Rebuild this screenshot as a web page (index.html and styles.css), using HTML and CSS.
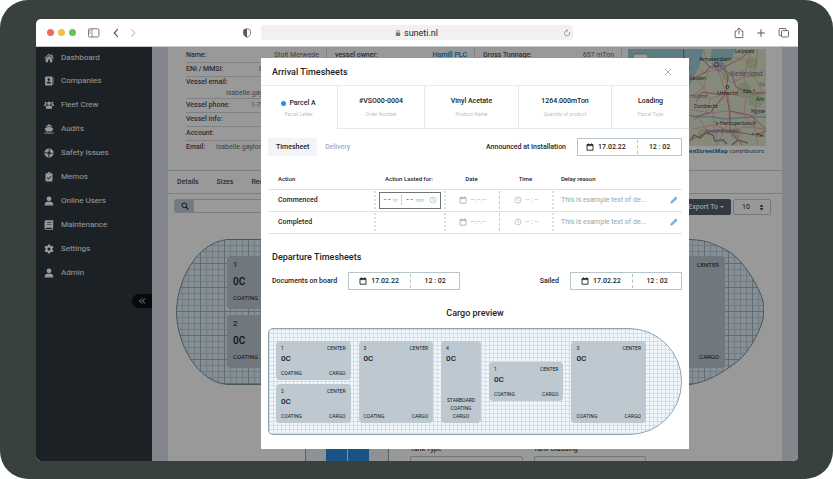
FILE: index.html
```html
<!DOCTYPE html>
<html lang="en">
<head>
<meta charset="utf-8">
<title>Arrival Timesheets</title>
<link rel="stylesheet" href="styles.css">
</head>
<body>
<svg class="sprite" aria-hidden="true">
  <symbol id="i-cal" viewBox="0 0 8 8"><path d="M1 1.500h6v5.700H1zM1 2.600h6M2.400.4v1.200M5.600.4v1.200" fill="none" stroke="currentColor" stroke-width=".9"/></symbol>
  <symbol id="i-clock" viewBox="0 0 8 8"><circle cx="4" cy="4" r="3" fill="none" stroke="currentColor" stroke-width=".7"/><path d="M4 2v2.100l1.400.6" fill="none" stroke="currentColor" stroke-width=".7"/></symbol>
  <symbol id="i-pen" viewBox="0 0 8 8"><path d="M.9 7.100l.5-1.800L5.700 1l1.300 1.300-4.300 4.300zM4.800 1.900l1.300 1.300M2 5.900l3-3" fill="#e4f1fd" stroke="#1f80e0" stroke-width=".7" stroke-linejoin="round"/></symbol>
  <symbol id="i-user" viewBox="0 0 10 10"><circle cx="5" cy="2.800" r="2.400"/><path d="M.8 9.600V8.400C.8 6.800 2 5.800 3.400 5.800h3.200c1.400 0 2.600 1 2.600 2.600v1.200z"/></symbol>
</svg>
<div class="frame">
<div class="browser">
  <header class="toolbar">
    <div class="tool-side">
      <span class="dot red"></span><span class="dot yellow"></span><span class="dot green"></span>
      <svg class="t-side" viewBox="0 0 12 10"><rect x=".5" y=".8" width="10.400" height="8.200" rx="1.200" fill="none" stroke="#6b6b6b" stroke-width=".9"/><path d="M4 .8V9M1.600 2.600h1.200M1.600 4h1.200M1.600 5.400h1.200" stroke="#6b6b6b" stroke-width=".7"/></svg>
      <svg class="t-nav" viewBox="0 0 6 10"><path d="M4.800 1.200L1.200 5l3.600 3.800" fill="none" stroke="#4d4d4d" stroke-width="1.100"/></svg>
      <svg class="t-nav next" viewBox="0 0 6 10"><path d="M1.200 1.200L4.800 5 1.200 8.800" fill="none" stroke="#aaa" stroke-width="1"/></svg>
      <svg class="t-shield" viewBox="0 0 8 10"><path d="M4 .8c1.200.1 2.400.5 3.300 1.100.3 1 .3 2 .2 3.400C7.300 7.300 6 8.600 4 9.300 2 8.600.7 7.300.5 5.300.4 3.900.4 2.900.7 1.900 1.600 1.300 2.800.9 4 .8z" fill="none" stroke="#666" stroke-width=".8"/><path d="M4 .8v8.500C2 8.600.7 7.300.5 5.300.4 3.900.4 2.900.7 1.900 1.600 1.300 2.800.9 4 .8z" fill="#5c5c5c"/></svg>
    </div>
    <label class="address">
      <svg class="t-lock" viewBox="0 0 6 8"><rect x=".8" y="3.500" width="4.400" height="3.600" rx=".6" fill="#777"/><path d="M1.800 3.600V2.400a1.200 1.200 0 012.400 0v1.200" fill="none" stroke="#777" stroke-width=".8"/></svg>
      <input type="text" value="suneti.nl" aria-label="Address">
      <svg class="t-reload" viewBox="0 0 8 8"><path d="M6.400 3a2.600 2.600 0 11-2.200-1.400" fill="none" stroke="#777" stroke-width=".7"/><path d="M3.500.4l1.300 1.200-1.300 1.200" fill="none" stroke="#777" stroke-width=".7"/></svg>
    </label>
    <div class="tool-side end">
      <svg class="t-share" viewBox="0 0 10 12"><path d="M3.200 4H1.200v6.600h7.600V4h-2M5 7.300V1M3 2.900L5 .9l2 2" fill="none" stroke="#5a5a5a" stroke-width=".9"/></svg>
      <svg class="t-plus" viewBox="0 0 10 10"><path d="M5 1.200v7.600M1.200 5h7.600" stroke="#5a5a5a" stroke-width="1"/></svg>
      <svg class="t-tabs" viewBox="0 0 12 12"><path d="M3.500 8.600H1.900a.8.8 0 01-.8-.8V2.300a.8.8 0 01.8-.8h5.400a.8.8 0 01.8.8v1.200" fill="none" stroke="#5a5a5a" stroke-width=".9"/><rect x="3.500" y="3.600" width="7" height="6.400" rx=".8" fill="none" stroke="#5a5a5a" stroke-width=".9"/></svg>
    </div>
  </header>
  <div class="app">
    <nav class="sidebar">
      <a href="#"><svg viewBox="0 0 10 10"><path d="M5 .8L.2 5l.6.700L5 2.100l4.200 3.600.6-.7L8.500 3.800V1.400H7.300v1.400zM5 2.900L1.700 5.700v3.500h2.400V6.600h1.800v2.600h2.400V5.700z"/></svg>Dashboard</a>
      <a href="#"><svg viewBox="0 0 10 10"><path fill-rule="evenodd" d="M1.800.6h6a.7.700 0 01.7.7v7.400a.7.700 0 01-.7.7h-6a.7.700 0 01-.7-.7V1.300a.7.700 0 01.7-.7zM4.800 2.300a1.300 1.300 0 100 2.600 1.300 1.300 0 000-2.600zM2.600 7.400h4.400c0-1.300-.8-2-2.200-2s-2.200.7-2.200 2zM8.900 2h.7v1.400h-.7zM8.900 4.300h.7v1.400h-.7zM8.900 6.600h.7V8h-.7z"/></svg>Companies</a>
      <a href="#"><svg viewBox="0 0 10 10"><circle cx="5" cy="3.300" r="1.700"/><circle cx="1.700" cy="2.800" r="1.100"/><circle cx="8.300" cy="2.800" r="1.100"/><path d="M2 8.800V7.200c0-1.100.8-1.800 1.800-1.800h2.400c1 0 1.800.7 1.800 1.800v1.600zM0 6V5.200c0-.6.5-1 1-1h1.400c.3 0 .5.100.7.300C2.300 4.900 1.800 5.400 1.700 6zM10 6V5.200c0-.6-.5-1-1-1H7.600c-.3 0-.5.100-.7.300.8.400 1.300.9 1.400 1.500z"/></svg>Fleet Crew</a>
      <a href="#"><svg viewBox="0 0 10 10"><path fill-rule="evenodd" d="M3.800.4h2.400v1.100h1.400v2.200l1.700.7-1.400 3H2.100l-1.400-3 1.700-.7V1.500h1.400zM3.300 2.500v.9L5 2.700l1.700.7v-.9z"/><path d="M.3 8.200c1 .8 1.900.8 2.900 0 1.200.8 2.400.8 3.600 0 1 .8 1.900.8 2.900 0v1c-1 .6-2 .6-2.900 0-1.200.7-2.400.7-3.600 0-.9.600-1.900.6-2.900 0z"/></svg>Audits</a>
      <a href="#"><svg viewBox="0 0 10 10"><g fill="none" stroke="currentColor"><circle cx="5" cy="5" r="3.200" stroke-width="2.300" stroke-dasharray="3.700 1.330" transform="rotate(12 5 5)"/><circle cx="5" cy="5" r="4.200" stroke-width=".7"/><circle cx="5" cy="5" r="2" stroke-width=".5"/></g></svg>Safety Issues</a>
      <a href="#"><svg viewBox="0 0 10 10"><path fill-rule="evenodd" d="M3.600 1.300a1.400 1.200 0 012.800 0h1.400a.7.700 0 01.7.7v6.800a.7.700 0 01-.7.7H2.200a.7.700 0 01-.7-.7V2a.7.700 0 01.7-.7zM3 5.900l1.500 1.600 2.800-2.900-.6-.6-2.200 2.200-.9-.9zM5 1a.4.400 0 100 .8A.4.400 0 005 1z"/></svg>Memos</a>
      <a href="#"><svg><use href="#i-user"/></svg>Online Users</a>
      <a href="#"><svg viewBox="0 0 10 10"><path fill-rule="evenodd" d="M1.800.2h7.400v7.300l-.4.400v1l.4.300v.6H2A1.400 1.400 0 01.6 8.400V1.600C.6.800 1.100.2 1.800.2zM2.900 2.200v.7h4.700v-.7zM2.900 3.900v.7h4.700v-.7zM2.200 7.700c-.7 0-.7 1.200 0 1.200h5.700V7.700z"/></svg>Maintenance</a>
      <a href="#"><svg viewBox="0 0 10 10"><circle cx="5" cy="5" r="2.500" fill="none" stroke="currentColor" stroke-width="2"/><path d="M4 .4h2l.3 2H3.700zM4 9.600h2l.3-2H3.700zM.5 3.500l1-1.700 1.900.8-1.200 2zM9.500 3.500l-1-1.700-1.900.8 1.200 2zM.5 6.500l1 1.700 1.900-.8-1.200-2zM9.500 6.500l-1 1.700-1.900-.8 1.200-2z"/></svg>Settings</a>
      <a href="#"><svg><use href="#i-user"/></svg>Admin</a>
      <button class="collapse" type="button" aria-label="Collapse menu"><svg viewBox="0 0 8 8"><path d="M4 1.500L1.500 4 4 6.500M7 1.500L4.500 4 7 6.500" fill="none" stroke="currentColor" stroke-width=".9"/></svg></button>
    </nav>
    <main class="page">
      <div class="card">
        <section class="summary">
          <dl class="facts">
            <div><dt>Name:</dt><dd class="end">Stolt Merwede</dd></div>
            <div><dt>ENI / MMSI:</dt><dd class="eni">0</dd></div>
            <div class="tall"><dt>Vessel email:</dt><dd>isabelle.gay</dd></div>
            <div><dt>Vessel phone:</dt><dd>1-7</dd></div>
            <div><dt>Vessel info:</dt><dd></dd></div>
            <div><dt>Account:</dt><dd></dd></div>
            <div><dt>Email:</dt><dd class="mail">isabelle.gaylord</dd></div>
          </dl>
          <dl class="facts"><div><dt>vessel owner:</dt><dd class="end"><a href="#">Hamill PLC</a></dd></div></dl>
          <dl class="facts"><div><dt>Gross Tonnage:</dt><dd class="end">657 mTon</dd></div></dl>
          <div class="map">
            <svg viewBox="0 0 138 97" preserveAspectRatio="xMidYMid slice" role="img" aria-label="Map of the Netherlands">
              <rect width="138" height="97" fill="#dfe6cd"/>
              <path d="M0 0h76c-3 14-7 24-14 35C50 52 34 66 0 74z" fill="#9fcfdb"/>
              <path d="M84 0h24l-4 9-9 4-2 7-5-6-6-3z" fill="#9fcfdb"/>
              <path d="M84 14l6 4 5-3 3 4-8 3zM60 66c10 4 20 0 30 3s26-2 48-1" fill="none" stroke="#8ec4d6" stroke-width="1.500"/>
              <g fill="#c7dbab"><circle cx="116" cy="40" r="7"/><circle cx="128" cy="50" r="8"/><circle cx="98" cy="27" r="4"/><circle cx="108" cy="84" r="6"/><circle cx="74" cy="84" r="4"/><circle cx="124" cy="14" r="6"/></g>
              <path d="M56 0c-2 8 2 14 6 20M62 92l4-6 6 3 5-5 8 2 2 6 8-1 4 4M104 96l6-5 10 3" fill="none" stroke="#8e739c" stroke-width="1.200"/>
              <g fill="none" stroke="#e0a0a8" stroke-width=".7">
                <path d="M60 24l14 12 8 14 16-6 20 4 20-6M76 2l4 16 10 2 14 14 12-6 22-2M66 46l10-8 4-18M82 50l-4 14-14 8M100 44l2 18-4 18-10 16M100 44L84 60l2 16 16 6 14-4 22 2M118 48l-2 16 6 12 16 6M90 20l8 24M62 60l20 4 20-2 18 6 18-6M64 80l22-4 4 20M122 4l-6 24 4 20M130 0l-4 26 10 20M104 80l10 16M68 14l8 10 14-4 14-12 18 4M128 56l-2 18 4 22M72 70l6 12 18-2"/>
              </g>
              <g fill="none" stroke="#d8708a" stroke-width=".9">
                <path d="M64 30l12-6 6-6 12-1 6 10-2 16-10 2-14-2-6 10M92 18l12 8 4 12 14 6 16 0M98 44l4 20 0 18 12 14M82 18L72 8M96 18l16-8 12-10M98 44l-16 20-16 4M102 62l20 4 16 14M64 90l20-8 20 0 22 4 12-4"/>
              </g>
              <rect x="5" y="5" width="15" height="16" rx="2" fill="#fff" stroke="#9aa" stroke-width="1"/>
              <circle cx="88.500" cy="15.500" r="2" fill="none" stroke="#333" stroke-width=".7"/><circle cx="99.500" cy="38" r="1.500" fill="none" stroke="#333" stroke-width=".7"/><circle cx="126" cy="41.500" r=".8" fill="none" stroke="#444" stroke-width=".5"/><circle cx="125" cy="85" r=".8" fill="none" stroke="#444" stroke-width=".5"/>
              <g class="towns">
                <text x="107" y="4">Lelystad</text>
                <text x="71" y="12" class="big">Amsterdam</text>
                <text x="62" y="31">Leiden</text>
                <text x="89" y="46" class="big">Utrecht</text>
                <text x="115" y="44">Ede</text>
                <text x="128" y="52">Arn</text>
                <text x="66" y="59">Dordrecht</text>
                <text x="123" y="64">Nijme</text>
                <text x="87" y="76">’s-Hertogenbosch</text>
                <text x="128" y="88">Hel</text>
                <g class="region"><text x="102" y="27" class="country">Nederland</text><text x="62" y="49">Holland</text><text x="77" y="84">Noord-Brabant</text><text x="131" y="37">Ge</text></g>
              </g>
            </svg>
            <p><a href="#">OpenStreetMap</a> contributors</p>
          </div>
        </section>
        <nav class="tabs"><a href="#">Details</a><a href="#">Sizes</a><a href="#">Rec</a></nav>
        <div class="filter">
          <div class="search"><button type="button" aria-label="Search"><svg viewBox="0 0 8 8"><circle cx="3.300" cy="3.300" r="2.300" fill="none" stroke="currentColor" stroke-width="1"/><path d="M5 5l2.400 2.400" stroke="currentColor" stroke-width="1.200"/></svg></button><input type="text" aria-label="Search tanks"></div>
          <button class="export" type="button">Export To <span class="caret"></span></button>
          <div class="count"><select aria-label="Rows per page"><option>10</option></select><svg viewBox="0 0 6 8"><path d="M3 .6l2.500 2.600h-5zM3 7.400l2.500-2.600h-5z"/></svg></div>
        </div>
        <div class="vessel">
          <svg class="hull" viewBox="0 0 588 146" preserveAspectRatio="none">
            <defs><pattern id="grid" width="24" height="24" patternUnits="userSpaceOnUse"><path d="M6.500 0v24M12.500 0v24M18.500 0v24M0 6.500h24M0 12.500h24M0 18.500h24" stroke="#bccdd9" stroke-width="1"/><path d="M0 .5h24M.5 0v24" stroke="#a0b4c1" stroke-width="1"/></pattern></defs>
            <path d="M51 .5H514C532 1 540 6 552 12C568 21 584 50 587 62C588 68 588 74 587 80C584 92 574 112 562 122C546 134 532 143 514 145.500H51C20 142 1 104 .5 73C1 42 20 4 51 .5z" fill="#e1effa"/>
            <path d="M51 .5H514C532 1 540 6 552 12C568 21 584 50 587 62C588 68 588 74 587 80C584 92 574 112 562 122C546 134 532 143 514 145.500H51C20 142 1 104 .5 73C1 42 20 4 51 .5z" fill="url(#grid)" stroke="#78909c" stroke-width="1"/>
          </svg>
          <div class="tank-stack">
            <article class="tank"><p><span>1</span></p><b>0C</b><p><span>COATING</span></p></article>
            <article class="tank"><p><span>2</span></p><b>0C</b><p><span>COATING</span></p></article>
          </div>
          <article class="tank last"><p><span></span><span>CENTER</span></p><p><span></span><span>CARGO</span></p></article>
        </div>
        <div class="details">
          <div class="diagram"><i></i><i></i></div>
          <label>Tank Type<input type="text"></label>
          <label>Tank Cladding<input type="text"></label>
        </div>
      </div>
    </main>
    <div class="overlay">
      <section class="modal" role="dialog" aria-label="Arrival Timesheets">
        <header class="modal-head"><h2>Arrival Timesheets</h2><button type="button" aria-label="Close"><svg viewBox="0 0 8 8"><path d="M1 1l6 6M7 1L1 7" stroke="#93a1ab" stroke-width=".8"/></svg></button></header>
        <ul class="parcel">
          <li class="active"><b><i></i>Parcel A</b><span>Parcel Letter</span></li>
          <li><b>#VSO00-0004</b><span>Order Number</span></li>
          <li><b>Vinyl Acetate</b><span>Product Name</span></li>
          <li><b>1264.000mTon</b><span>Quantity of product</span></li>
          <li><b>Loading</b><span>Parcel Type</span></li>
        </ul>
        <div class="body">
          <div class="line">
            <button class="tab on" type="button">Timesheet</button><button class="tab" type="button">Delivery</button>
            <span class="push caption">Announced at Installation</span>
            <div class="stamp wide"><svg><use href="#i-cal"/></svg><input class="d" type="text" value="17.02.22" aria-label="Installation date"><input class="t" type="text" value="12 : 02" aria-label="Installation time"></div>
          </div>
          <table class="sheet">
            <colgroup><col class="c1"><col class="c2"><col class="c3"><col class="c4"><col class="c5"></colgroup>
            <thead><tr><th class="first">Action</th><th>Action Lasted for:</th><th>Date</th><th>Time</th><th class="left">Delay reason</th></tr></thead>
            <tbody>
              <tr><td class="first">Commenced</td>
                <td><div class="cell"><div class="duration"><input type="text" value="- -" aria-label="Hours"><span class="hr">hr</span><input type="text" value="- -" aria-label="Minutes"><span class="min">min</span><svg><use href="#i-clock"/></svg></div></div></td>
                <td><div class="cell"><svg><use href="#i-cal"/></svg><span>--.--.--</span></div></td>
                <td><div class="cell thin"><svg><use href="#i-clock"/></svg><span>-- : --</span></div></td>
                <td><div class="cell reason"><span>This is example text of de...</span><button type="button" aria-label="Edit reason"><svg><use href="#i-pen"/></svg></button></div></td></tr>
              <tr><td class="first">Completed</td>
                <td><div class="cell"></div></td>
                <td><div class="cell"><svg><use href="#i-cal"/></svg><span>--.--.--</span></div></td>
                <td><div class="cell thin"><svg><use href="#i-clock"/></svg><span>-- : --</span></div></td>
                <td><div class="cell reason"><span>This is example text of de...</span><button type="button" aria-label="Edit reason"><svg><use href="#i-pen"/></svg></button></div></td></tr>
            </tbody>
          </table>
          <h2 class="departure">Departure Timesheets</h2>
          <div class="line departures">
            <span class="caption board">Documents on board</span>
            <div class="stamp"><svg><use href="#i-cal"/></svg><input class="d" type="text" value="17.02.22" aria-label="Documents date"><input class="t" type="text" value="12 : 02" aria-label="Documents time"></div>
            <span class="push caption">Sailed</span>
            <div class="stamp"><svg><use href="#i-cal"/></svg><input class="d" type="text" value="17.02.22" aria-label="Sailed date"><input class="t" type="text" value="12 : 02" aria-label="Sailed time"></div>
          </div>
          <h2 class="preview">Cargo preview</h2>
          <div class="cargo">
            <div class="pair">
              <article class="tank small"><p><span>1</span><span>CENTER</span></p><b>0C</b><p><span>COATING</span><span>CARGO</span></p></article>
              <article class="tank small"><p><span>2</span><span>CENTER</span></p><b>0C</b><p><span>COATING</span><span>CARGO</span></p></article>
            </div>
            <article class="tank small"><p><span>3</span><span>CENTER</span></p><b>0C</b><p><span>COATING</span><span>CARGO</span></p></article>
            <article class="tank small narrow"><p><span>4</span></p><b>0C</b><div><span>STARBOARD</span><span>COATING</span><span>CARGO</span></div></article>
            <article class="tank small mid"><p><span>1</span><span>CENTER</span></p><b>0C</b><p><span>COATING</span><span>CARGO</span></p></article>
            <article class="tank small"><p><span>3</span><span>CENTER</span></p><b>0C</b><p><span>COATING</span><span>CARGO</span></p></article>
          </div>
        </div>
      </section>
    </div>
  </div>
</div>
</div>
</body>
</html>
```
FILE: styles.css
```css
* { box-sizing: border-box; margin: 0; padding: 0; }
html { background: #fff; }
body { font: 8px/10px Roboto, "Liberation Sans", sans-serif; color: #1d2226; }
button, input, select { font: inherit; color: inherit; border: 0; background: none; min-width: 0; border-radius: 0; }
a { color: inherit; text-decoration: none; }
svg { display: block; flex: none; fill: currentColor; width: 8px; height: 8px; }
ul { list-style: none; }
.sprite { position: absolute; width: 0; height: 0; }

.frame { height: 100vh; padding: 19px 35px 18px 36px; background: #38413c; border-radius: 28px; }
.browser { height: 100%; display: flex; flex-direction: column; border-radius: 5px; overflow: hidden; background: #fff; }

/* Browser toolbar */
.toolbar { display: grid; grid-template-columns: 1fr minmax(0, 312px) 1fr; align-items: center; height: 28px; flex: none; border-bottom: 1px solid #c9c9c9; }
.tool-side { display: flex; align-items: center; padding-left: 11px; }
.dot { width: 7px; height: 7px; border-radius: 50%; margin-right: 4px; }
.red { background: #ed6a5e; }
.yellow { background: #f5bd4f; }
.green { background: #61c454; }
.t-side { width: 12px; height: 10px; margin-left: 8px; }
.t-nav { width: 6px; height: 10px; margin-left: 13px; }
.t-nav.next { margin-left: 11px; }
.t-shield { width: 8px; height: 10px; margin-left: auto; margin-right: 10px; }
.address { display: flex; align-items: center; gap: 3px; height: 15px; border-radius: 3px; background: #f1f1f1; padding-right: 2px; }
.address input { width: 40px; font-size: 9px; }
.t-lock { width: 6px; height: 8px; margin-left: auto; }
.t-reload { margin-left: 116px; }
.tool-side.end { justify-content: flex-end; gap: 12px; padding-right: 8px; }
.t-share { width: 10px; height: 12px; }
.t-plus { width: 10px; height: 10px; }
.t-tabs { width: 12px; height: 12px; }

/* Application */
.app { position: relative; flex: 1; min-height: 0; display: flex; overflow: hidden; background: #dbe0e9; }
.sidebar { width: 116px; flex: none; background: #2d373e; color: #fff; display: flex; flex-direction: column; }
.sidebar a { display: flex; align-items: center; gap: 7px; height: 24px; padding-left: 8px; }
.sidebar a svg { width: 10px; height: 10px; }
.sidebar a:first-child { height: 22px; }
.collapse { align-self: flex-end; width: 20px; height: 14px; margin-top: 9px; border-radius: 7px 0 0 7px; background: #0c0f12; color: #fff; display: flex; align-items: center; justify-content: center; }
.page { flex: 1; min-width: 0; padding: 0 16px; }
.card { background: #fff; height: 100%; }
.summary { display: grid; grid-template-columns: 159px 148px 147px 1fr; height: 124px; border-bottom: 1px solid #cfd3d6; }
.facts { padding: 2px 7px 0 8px; border-right: 1px solid #d8dbde; color: #6a7075; font-size: 7px; }
.facts:first-child { padding-left: 18px; }
.facts div { display: flex; justify-content: space-between; height: 14px; line-height: 13px; border-bottom: 1px solid #d4d8da; white-space: nowrap; }
.facts div:last-child { border: 0; }
.facts dt { font-weight: 500; color: #4a5054; }
.facts dd { width: 68px; }
.facts .end { text-align: right; }
.facts .eni { width: 60px; }
.facts .mail { width: 103px; }
.facts a { color: #2674b8; font-weight: 500; }
.facts .tall { height: 22px; flex-direction: column; line-height: 10px; }
.facts .tall dd { margin-left: 40px; }
.map { margin: 2px 16px 0 6px; overflow: hidden; }
.map svg { width: 100%; height: 97px; }
.map p { font: 6px/10px "Open Sans", sans-serif; text-align: right; padding-right: 2px; white-space: nowrap; color: #333; }
.map p a { color: #0078a8; font-weight: 700; }
.towns { font: 5px "Noto Sans", sans-serif; fill: #333; }
.towns .big { font-size: 6px; }
.towns .country { font-size: 7px; }
.region { fill: #8d64a0; font-style: italic; }
.tabs { display: flex; gap: 18px; height: 23px; align-items: center; padding-left: 9px; border-bottom: 1px solid #cfd3d6; color: #4a5054; font-size: 7px; font-weight: 500; }
.filter { display: flex; align-items: flex-start; padding: 5px 11px 0 6px; gap: 2px; }
.search { display: flex; flex: 1; height: 14px; margin-right: 100px; border: 1px solid #ccd3d8; border-radius: 2px; }
.search button { width: 19px; background: #c3ccd5; display: flex; align-items: center; justify-content: center; }
.search input { flex: 1; }
.export { display: flex; align-items: center; justify-content: flex-end; gap: 2px; width: 62px; height: 16px; padding-right: 7px; border-radius: 2px; background: #55606a; color: #fff; font-size: 7px; font-weight: 500; }
.caret { border: 2px solid transparent; border-top-color: #fff; border-bottom: 0; }
.count { display: flex; align-items: center; width: 38px; height: 16px; border: 1px solid #c6ccd1; border-radius: 2px; padding-right: 6px; font-size: 7px; }
.count select { flex: 1; appearance: none; padding-left: 8px; }
.count svg { width: 5px; height: 7px; }

/* Vessel plan behind the dialog */
.vessel { position: relative; display: flex; justify-content: space-between; height: 146px; margin: 24px 18px 0 8px; padding: 17px 39px 17px 51px; }
.hull { position: absolute; inset: 0; width: 100%; height: 100%; }
.tank-stack { position: relative; display: grid; grid-template-rows: 1fr 1fr; gap: 6px; width: 100px; }
.tank { position: relative; display: flex; flex-direction: column; justify-content: space-between; border-radius: 4px; background: #bdc8d1; padding: 4px 6px 6px; color: #15191c; font-size: 6px; }
.tank p { display: flex; justify-content: space-between; }
.tank b { font-size: 10px; font-weight: 500; line-height: 12px; }
.tank-stack p:first-child { font-size: 8px; }
.tank.last { width: 100px; }
.details { display: flex; gap: 11px; padding: 60px 136px 0 137px; font-size: 7px; }
.details label { flex: 1; white-space: nowrap; line-height: 9px; }
.details input { display: block; width: 100%; height: 14px; margin-top: 2px; border: 1px solid #bcc3c8; border-radius: 2px; }
.diagram { display: flex; justify-content: center; gap: 1px; width: 84px; height: 20px; margin-right: 10px; border: solid #90a4ae; border-width: 0 1px; background: #eef4f9; }
.diagram i { width: 21px; background: #2f8be0; }

/* Dialog */
.overlay { position: absolute; inset: 0; display: flex; justify-content: center; align-items: flex-start; padding: 11px 0 0 116px; background: rgba(0, 0, 0, .4); }
.modal { width: 100%; max-width: 428px; background: #fff; padding-bottom: 14px; }
.modal h2 { font-size: 9px; font-weight: 500; line-height: 12px; }
.modal-head { display: flex; justify-content: space-between; align-items: center; height: 28px; padding: 0 17px 0 11px; border-bottom: 1px solid #e9ebf2; }
.parcel { display: grid; grid-template-columns: 76fr 87fr 94fr 93fr 78fr; height: 43px; }
.parcel li { display: flex; flex-direction: column; align-items: center; justify-content: center; gap: 3px; padding-top: 1px; border-bottom: 1px solid #e6e8f0; border-left: 1px solid #e6e8f0; }
.parcel .active { border-color: transparent; padding: 3px 2px 0 0; gap: 1px; }
.parcel b { display: flex; align-items: center; gap: 3px; font-size: 7px; font-weight: 500; }
.parcel i { width: 5px; height: 5px; border-radius: 50%; background: #2c8cec; }
.parcel span { font-size: 5px; color: #b9c1d0; }
.body { padding: 9px 7px 0; }
.line { display: flex; align-items: center; }
.tab { height: 18px; padding: 0 8px; font-size: 7px; font-weight: 500; color: #a3afc2; }
.tab.on { background: #f3f4f7; color: #1d2226; }
.push { margin-left: auto; }
.caption { font-size: 7px; font-weight: 500; margin-right: 11px; }
.stamp { display: flex; align-items: center; width: 112px; height: 18px; border: 1px solid #b8c6cc; padding-left: 10px; font-size: 7px; font-weight: 500; }
.stamp.wide { width: 105px; padding-left: 8px; }
.stamp svg { margin-right: 4px; }
.stamp .d { width: 40px; height: 14px; border-right: 1px dashed #b4c2c8; }
.stamp .t { flex: 1; width: 20px; text-align: center; }
.sheet { width: 100%; table-layout: fixed; border-collapse: collapse; margin-top: 14px; }
.c1 { width: 25.6%; }
.c2 { width: 16.9%; }
.c3 { width: 13.3%; }
.c4 { width: 12.8%; }
.sheet tr { height: 22px; border-bottom: 1px solid #dde3e5; }
.sheet thead tr { height: 19px; }
.sheet th { font-size: 6px; font-weight: 500; }
.sheet .first { text-align: left; padding-left: 10px; }
.sheet .left { text-align: left; padding-left: 9px; }
.sheet td { font-size: 7px; }
.sheet td.first { font-weight: 500; }
.cell { display: flex; align-items: center; justify-content: center; gap: 4px; height: 18px; border-left: 2px dotted #dbe2e4; color: #a7b5bb; }
.cell.thin { border-left: 1px dashed #c3ced2; }
.cell.reason { justify-content: space-between; padding: 0 4px 0 7px; white-space: nowrap; color: #93a6ae; }
.reason button { display: flex; }
.duration { display: flex; align-items: center; width: 62px; height: 17px; border: 1px solid #6c7478; padding: 0 3px 0 4px; font-size: 5px; }
.duration input { width: 9px; color: #1d2226; font-size: 8px; }
.duration svg { margin-left: auto; }
.hr { border-right: 1px dashed #c3ced2; padding-right: 4px; margin-right: 4px; }
.departure { padding: 0 4px; margin-top: 17px; }
.departures { margin-top: 9px; }
.departures .board { margin-left: 4px; }
.preview { text-align: center; margin-top: 17px; }
.cargo {
  display: grid; grid-template-columns: 75fr 75fr 40fr 75fr 75fr; gap: 8px; height: 107px; margin-top: 9px; padding: 12px 35px 11px 7px;
  border: 1px solid #90a4ae; border-radius: 5px 53px 53px 5px;
  background: repeating-linear-gradient(90deg, #d0dee6 0 1px, transparent 1px 4px), repeating-linear-gradient(#d0dee6 0 1px, transparent 1px 4px), #f0f8fe;
}
.pair { display: grid; grid-template-rows: 1fr 1fr; gap: 4px; }
.small { font-size: 5px; line-height: 6px; padding: 4px 5px; }
.small b { font-size: 8px; line-height: 10px; margin: 3px 0 auto; }
.narrow div { display: grid; justify-items: center; gap: 2px; }
.small.mid { align-self: center; height: 39px; }
```
